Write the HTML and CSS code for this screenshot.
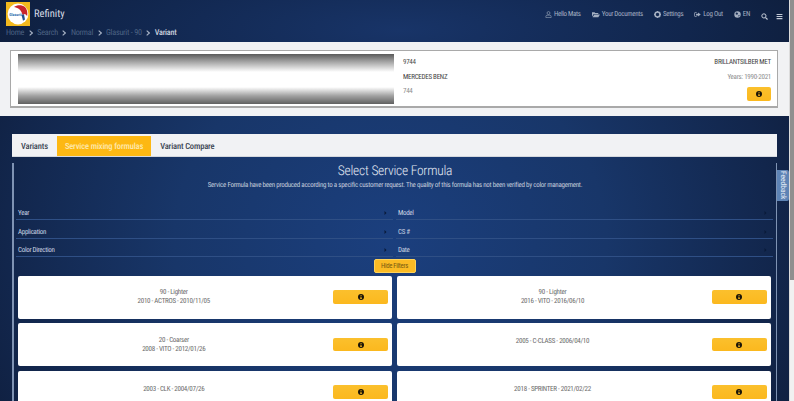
FILE: index.html
```html
<!DOCTYPE html>
<html lang="en">
<head>
<meta charset="utf-8">
<title>Refinity</title>
<link rel="stylesheet" href="styles.css">
</head>
<body>
<svg class="sprite" width="0" height="0">
  <symbol id="info" viewBox="0 0 16 16"><circle cx="8" cy="8" r="8" fill="#1a1408"/><rect x="6.8" y="3" width="2.6" height="2.6" fill="#fbb81e"/><path d="M5.8 7h3.6v4.6h1v1.4H5.8v-1.4h1V8.4h-1z" fill="#fbb81e"/></symbol>
  <symbol id="chev" viewBox="0 0 6 8"><path d="M1 0l4 4-4 4z" fill="#0a1a38"/></symbol>
  <symbol id="crumb" viewBox="0 0 6 8"><path d="M1 .5l4 3.5-4 3.5" fill="none" stroke="currentColor" stroke-width="1.7"/></symbol>
</svg>
<div class="page">
  <header class="header">
    <div class="top">
      <div class="brand">
        <svg class="logo" viewBox="0 0 24 24"><rect width="24" height="24" fill="#f2b91e"/><circle cx="12" cy="12" r="10.400" fill="#fff"/><path d="M8 5c3-2.500 8-2.500 11 0 2 2 2.800 5.500 2.200 9l-2.200-2-2.500 1c-.5-2.500-1.500-4.500-3.500-6C11.500 5.800 9.500 5.500 8 5z" fill="#c8242c"/><path d="M15.500 13l2.500-.8 1 5.300-2 1.200z" fill="#24508f"/><text class="logo-text" x="3.200" y="13.700">Glasurit</text></svg>
        <span class="brand-name">Refinity</span>
      </div>
      <nav class="nav">
        <a class="nav-item"><svg class="ico" viewBox="0 0 12 12"><circle cx="6" cy="3.500" r="2.500" fill="none" stroke="currentColor"/><path d="M1.500 11.300V9.200c0-1.200 1-2 2.200-2h4.600c1.200 0 2.200.8 2.200 2v2.100z" fill="none" stroke="currentColor"/></svg>Hello Mats</a>
        <a class="nav-item"><svg class="ico ico-wide" viewBox="0 0 14 12"><path d="M0 2h4.500l1.200 1.300H11V5H3L0 10z M1 11l3-5h10l-3 5z" fill="currentColor"/></svg>Your Documents</a>
        <a class="nav-item"><svg class="ico" viewBox="0 0 12 12"><circle cx="6" cy="6" r="4.300" fill="none" stroke="currentColor" stroke-width="2.800"/><path d="M6 0v2M6 10v2M0 6h2M10 6h2M1.800 1.800l1.400 1.400M8.800 8.800l1.400 1.400M1.800 10.200l1.400-1.400M8.800 3.200l1.400-1.400" stroke="currentColor" stroke-width="1.800"/></svg>Settings</a>
        <a class="nav-item"><svg class="ico" viewBox="0 0 12 12"><path d="M4.500 2.500H2a1 1 0 0 0-1 1v5a1 1 0 0 0 1 1h2.500" fill="none" stroke="currentColor" stroke-width="1.300"/><path d="M7 2.500L11.500 6 7 9.500V7.500H3.500v-3H7z" fill="currentColor"/></svg>Log Out</a>
        <a class="nav-item"><svg class="ico" viewBox="0 0 12 12"><circle cx="6" cy="6" r="5.500" fill="currentColor"/><path d="M3 2.500l3 .5 1 2-2 1.500-2-1zM7.500 7l2.500.5-2 2.500z" fill="#14294f"/></svg>EN</a>
        <a class="nav-icon"><svg class="ico-lg" viewBox="0 0 12 12"><circle cx="5" cy="5" r="3.600" fill="none" stroke="currentColor" stroke-width="1.700"/><path d="M7.800 7.800l3.400 3.400" stroke="currentColor" stroke-width="2"/></svg></a>
        <a class="nav-icon"><svg class="ico-lg" viewBox="0 0 12 12"><path d="M1 1.500h10v2H1zM1 5h10v2H1zM1 8.500h10v2H1z" fill="currentColor"/></svg></a>
      </nav>
    </div>
    <div class="crumbs">
      <span>Home</span><svg class="crumb-sep"><use href="#crumb"/></svg>
      <span>Search</span><svg class="crumb-sep"><use href="#crumb"/></svg>
      <span>Normal</span><svg class="crumb-sep"><use href="#crumb"/></svg>
      <span>Glasurit - 90</span><svg class="crumb-sep"><use href="#crumb"/></svg>
      <span class="crumb-current">Variant</span>
    </div>
  </header>

  <section class="summary">
    <div class="summary-card">
      <div class="swatch"></div>
      <div class="summary-info">
        <div class="info-col">
          <div>9744</div>
          <div class="strong">MERCEDES BENZ</div>
          <div class="muted">744</div>
        </div>
        <div class="info-col info-right">
          <div class="strong">BRILLANTSILBER MET</div>
          <div class="muted">Years: 1990-2021</div>
          <button class="btn btn-small"><svg class="info-ico"><use href="#info"/></svg></button>
        </div>
      </div>
    </div>
  </section>

  <main class="content">
    <div class="tabs">
      <span class="tab">Variants</span>
      <span class="tab tab-active">Service mixing formulas</span>
      <span class="tab">Variant Compare</span>
    </div>
    <div class="panel">
      <h1 class="title">Select Service Formula</h1>
      <p class="subtitle">Service Formula have been produced according to a specific customer request. The quality of this formula has not been verified by color management.</p>
      <div class="filters">
        <div class="filter"><span>Year</span><svg class="chev"><use href="#chev"/></svg></div>
        <div class="filter"><span>Model</span><svg class="chev"><use href="#chev"/></svg></div>
        <div class="filter"><span>Application</span><svg class="chev"><use href="#chev"/></svg></div>
        <div class="filter"><span>CS #</span><svg class="chev"><use href="#chev"/></svg></div>
        <div class="filter"><span>Color Direction</span><svg class="chev"><use href="#chev"/></svg></div>
        <div class="filter"><span>Date</span><svg class="chev"><use href="#chev"/></svg></div>
      </div>
      <div class="toggle-row"><button class="hide-btn">Hide Filters</button></div>
      <div class="results">
        <div class="result"><div class="result-text"><div>90 - Lighter</div><div>2010 - ACTROS - 2010/11/05</div></div><button class="btn btn-wide"><svg class="info-ico"><use href="#info"/></svg></button></div>
        <div class="result"><div class="result-text"><div>90 - Lighter</div><div>2016 - VITO - 2016/06/10</div></div><button class="btn btn-wide"><svg class="info-ico"><use href="#info"/></svg></button></div>
        <div class="result"><div class="result-text"><div>20 - Coarser</div><div>2008 - VITO - 2012/01/26</div></div><button class="btn btn-wide"><svg class="info-ico"><use href="#info"/></svg></button></div>
        <div class="result"><div class="result-text single"><div>2005 - C-CLASS - 2006/04/10</div></div><button class="btn btn-wide"><svg class="info-ico"><use href="#info"/></svg></button></div>
        <div class="result"><div class="result-text single"><div>2003 - CLK - 2004/07/26</div></div><button class="btn btn-wide"><svg class="info-ico"><use href="#info"/></svg></button></div>
        <div class="result"><div class="result-text single"><div>2018 - SPRINTER - 2021/02/22</div></div><button class="btn btn-wide"><svg class="info-ico"><use href="#info"/></svg></button></div>
      </div>
    </div>
  </main>
  <a class="feedback">Feedback</a>
</div>
<div class="scrollbar"><div class="thumb"></div></div>
</body>
</html>
```

FILE: styles.css
```css
* { box-sizing: border-box; }
html, body { margin: 0; height: 401px; overflow: hidden; }
body {
  display: flex;
  font-family: Roboto, "Liberation Sans", sans-serif;
  font-stretch: 75%;
  text-rendering: geometricPrecision;
  background: #f1f1f1;
}
.sprite { position: absolute; }

.page {
  position: relative;
  flex: 1;
  min-width: 0;
  height: 401px;
  overflow: hidden;
  background: radial-gradient(ellipse 480px 420px at 390px 240px, #1b3f7e 0%, #183669 45%, #12264c 80%, #0e1c39 100%);
}
.scrollbar { width: 5px; background: #f1f1f1; border-left: 1px solid #dcdcdc; }
.thumb { height: 280px; background: #8f8f8f; }

.header {
  height: 42px;
  padding: 2px 6px 0;
  background: radial-gradient(ellipse 480px 120px at 400px 30px, #183468 0%, #11264d 60%, #0d1b36 100%);
}
.top { display: flex; justify-content: space-between; height: 24px; }
.brand { display: flex; align-items: center; gap: 4px; }
.logo { width: 24px; height: 24px; display: block; }
.logo-text { font-size: 4px; font-weight: 700; fill: #2d6cb0; }
.brand-name { color: #d5dbe5; font-size: 10.500px; margin-top: -1px; }
.nav { display: flex; align-items: center; color: #a4afc1; font-size: 7px; letter-spacing: -.3px; }
.nav-item { display: flex; align-items: center; gap: 2px; margin-right: 11px; white-space: nowrap; }
.nav-icon { display: flex; margin-right: 8px; color: #c5ccd8; margin-top: 5px; }
.nav-icon:last-child { margin-right: 0; }
.ico { width: 7px; height: 7px; display: block; }
.ico-wide { width: 8px; }
.ico-lg { width: 7px; height: 7px; display: block; }

.crumbs { display: flex; align-items: center; height: 14px; color: #4c6283; font-size: 8.200px; letter-spacing: -.25px; }
.crumb-sep { width: 4px; height: 6px; margin: 0 4.500px; color: #a9b4c6; }
.crumb-current { color: #c9d1de; font-weight: 500; }

.summary { height: 74px; padding: 8px 11px 8px 10px; background: #f1f2f4; }
.summary-card {
  display: flex;
  height: 58px;
  padding: 3px 6px 3px 7px;
  background: #fff;
  border: 1px solid #a9a9a9;
  border-bottom-width: 2px;
}
.swatch {
  width: 376px;
  height: 50px;
  background: linear-gradient(#5a5a5a 0%, #9d9d9d 14%, #fff 36%, #fff 66%, #a0a0a0 84%, #606060 100%);
}
.summary-info { flex: 1; display: flex; justify-content: space-between; padding-left: 9px; font-size: 7px; letter-spacing: -.28px; color: #4a4a4a; }
.info-col { display: flex; flex-direction: column; padding-top: 4px; }
.info-col > div { height: 14.500px; line-height: 8px; }
.info-right { align-items: flex-end; }
.strong { color: #444; }
.muted { color: #8c8c8c; }

.btn {
  display: flex;
  align-items: center;
  justify-content: center;
  border: 0;
  padding: 0;
  background: linear-gradient(#fbc02d, #fbb81e);
  border-radius: 2px;
}
.btn-small { width: 24px; height: 14px; }
.info-ico { width: 6px; height: 6px; display: block; }

.content { margin: 18px 12px 0; }
.tabs {
  display: flex;
  height: 23px;
  padding-top: 2px;
  background: #f1f2f4;
  border-bottom: 1px solid #d4d8de;
  font-size: 8.500px;
  letter-spacing: -.15px;
  font-weight: 500;
  color: #3a4552;
}
.tab { display: flex; align-items: center; padding: 1px 9px 0; }
.tab-active { padding: 1px 8px 0; background: #fdb813; color: #fde9b0; }

.panel {
  border-left: 2px solid #7f93b3;
  border-right: 1px solid #7f93b3;
  height: 300px;
  padding: 0 3px;
}
.title { margin: 6px 0 0; height: 17px; line-height: 17px; text-align: center; color: #e4eaf3; font-size: 13.500px; letter-spacing: -.25px; font-weight: 300; }
.subtitle { margin: 0; height: 10px; line-height: 10px; text-align: center; color: #c3cddc; font-size: 7px; letter-spacing: -.27px; }
.filters { display: grid; grid-template-columns: 376.700px 376.700px; column-gap: 3.300px; margin: 11.500px 0 0 -1px; }
.filter {
  display: flex;
  justify-content: space-between;
  align-items: center;
  height: 18.500px;
  padding: 5.500px 5.500px 0 2px;
  border-bottom: 1px solid #2f4f85;
  color: #c9d3e2;
  font-size: 7px;
  letter-spacing: -.3px;
}
.chev { width: 3px; height: 4px; }
.toggle-row { display: flex; justify-content: center; height: 18.500px; padding-top: 1.500px; margin-left: -1px; }
.hide-btn {
  width: 42px;
  height: 14.500px;
  padding: 0;
  border: 1px solid #fdd25a;
  border-radius: 2px;
  background: #fbbb24;
  color: #7a5a10;
  font: 6.800px Roboto, "Liberation Sans", sans-serif;
  font-stretch: 75%;
  letter-spacing: -.3px;
}
.results { display: grid; grid-template-columns: 374px 373.500px; gap: 4.500px 5px; margin-left: 1px; }
.result {
  display: flex;
  align-items: center;
  height: 43px;
  background: #fff;
  border-radius: 2px;
  padding-right: 4px;
}
.result-text { flex: 1; padding-right: 3.500px; text-align: center; color: #6a6a6a; font-size: 7px; letter-spacing: -.28px; line-height: 9px; }
.result-text.single { padding-bottom: 6px; }
.result .btn-wide { width: 55px; height: 13.500px; }

.feedback {
  position: absolute;
  left: 777px;
  top: 170px;
  width: 12px;
  height: 31px;
  display: flex;
  align-items: center;
  justify-content: center;
  writing-mode: vertical-rl;
  background: #5d83b5;
  border-radius: 0 2px 2px 0;
  color: #e6edf6;
  font-size: 7.500px;
}
```
